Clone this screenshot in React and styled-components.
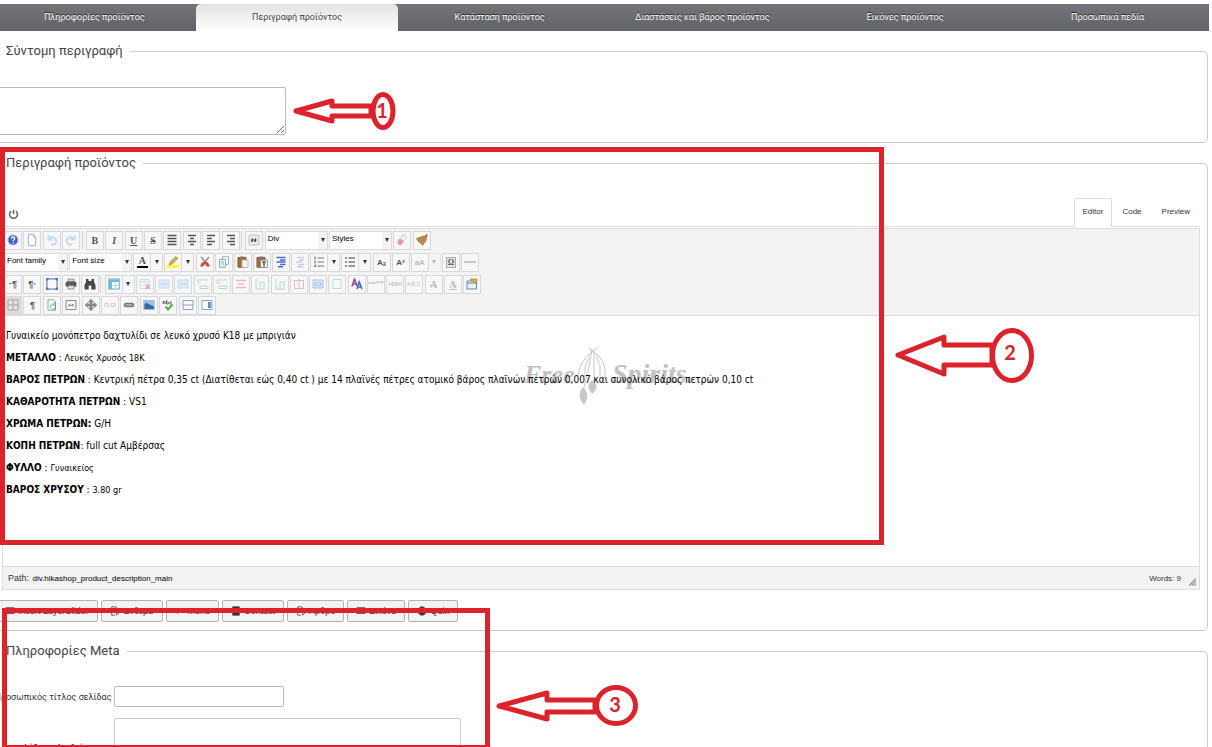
import React, { useState } from "react";
import styled, { createGlobalStyle, css } from "styled-components";

const RED = "#dc232b";

const productTabs = [
  "Πληροφορίες προϊόντος",
  "Περιγραφή προϊόντος",
  "Κατάσταση προϊόντος",
  "Διαστάσεις και βάρος προϊόντος",
  "Εικόνες προϊόντος",
  "Προσωπικά πεδία",
];

const glyphs = {
  help: (
    <>
      <circle cx="6" cy="6" r="5" fill="#3d63c9" stroke="#9fb2e4" />
      <path d="M4.3 4.6q.2-1.6 1.8-1.6t1.7 1.5q0 .8-.9 1.3-.8.5-.8 1.2M6.1 8.3v1.2" fill="none" stroke="#fff" strokeWidth="1.3" />
    </>
  ),
  page: <path d="M2.5.5h5l2 2.500v8.500h-7zM7.500.5v2.500h2" fill="#fafcff" stroke="#a9b9c4" />,
  undo: <path d="M2.500 1.500v4h4M3 5q3-3.500 6-.500t-.500 6H5" fill="none" stroke="#bddcec" strokeWidth="2" />,
  redo: <path d="M9.500 1.500v4h-4M9 5q-3-3.500-6-.500t.500 6H7" fill="none" stroke="#bddcec" strokeWidth="2" />,
  justify: <path d="M1.500 1.500h9M1.500 4.500h9M1.500 7.500h9M1.500 10.500h9" stroke="#555" strokeWidth="1.700" />,
  center: <path d="M2 1.500h8M4 4.500h4M2 7.500h8M4 10.500h4" stroke="#555" strokeWidth="1.500" />,
  left: <path d="M2 1.500h8M2 4.500h5M2 7.500h8M2 10.500h5" stroke="#555" strokeWidth="1.500" />,
  right: <path d="M2 1.500h8M5 4.500h5M2 7.500h8M5 10.500h5" stroke="#555" strokeWidth="1.500" />,
  quote: (
    <>
      <rect x="1" y="1" width="10" height="10" rx="1" fill="#eee" stroke="#bbb" />
      <path d="M3.500 7.500V5.500l1.500-1v3zM6.500 7.500V5.500l1.500-1v3z" fill="#444" stroke="#444" strokeWidth=".6" />
    </>
  ),
  eraser: (
    <>
      <path d="M1.500 8.500l2-3.500 4 2-2 3.500q-3 1-4-2z" fill="#e79aa4" stroke="#c98a94" strokeWidth=".6" />
      <path d="M4 5l3-4q3-.500 3.800 2L7.500 7z" fill="#f3eef0" stroke="#aab" strokeWidth=".6" />
    </>
  ),
  broom: (
    <>
      <path d="M11.500.5L8 4" stroke="#8a5a28" strokeWidth="1.500" />
      <path d="M.5 4.500l7-2.500 3 .5-.5 4L6.500 11.500 5 9 3 8.500z" fill="#c08a45" stroke="#98672c" strokeWidth=".6" />
    </>
  ),
  cut: (
    <>
      <path d="M2 1l6 7M10 1L4 8" stroke="#8c8c8c" strokeWidth="1.400" />
      <path d="M3 6.500l3-1 3 1 2 4H8L6 8l-2 2.500H1z" fill="#d9433f" />
    </>
  ),
  copy: (
    <>
      <path d="M4.500.8h6v7.500h-6z" fill="#fff" stroke="#8eabb0" />
      <path d="M1.500 3.500h6v7.700h-6zM3 6h3M3 8h3" fill="#eef8f8" stroke="#8eabb0" />
    </>
  ),
  paste: (
    <>
      <path d="M1 1.500h8v9.700H1z" fill="#a5713d" stroke="#82542a" />
      <path d="M3 .5h4v2H3z" fill="#777" />
      <path d="M5 4h6v7.500H5z" fill="#f4f4f4" stroke="#aaa" strokeWidth=".7" />
    </>
  ),
  pasteText: (
    <>
      <path d="M1 1.500h8v9.700H1z" fill="#a5713d" stroke="#82542a" />
      <path d="M3 .5h4v2H3z" fill="#777" />
      <path d="M4.500 4h7v7.500h-7z" fill="#f4f4f4" stroke="#777" strokeWidth=".7" />
      <path d="M6 6h4M8 6v4.500" stroke="#333" strokeWidth="1.200" />
    </>
  ),
  indent: <path d="M1.500 1.500h9M5 4h5.500M1.500 6h9M5 8.500h5.500M3 10.800h5" stroke="#4a6fc8" strokeWidth="1.500" />,
  outdent: <path d="M3 1.500h7M5 4h5M2 6h6M4 8.500h6M3 10.800h6" stroke="#c6d0e2" strokeWidth="1.400" />,
  ol: <path d="M4.500 2H11M4.500 6H11M4.500 10H11M2 .5v3M2 4.500v3M1 10.500h1.500v-2" stroke="#777" strokeWidth="1.200" fill="none" />,
  ul: <path d="M4.500 2H11M4.500 6H11M4.500 10H11M1 2h2M1 6h2M1 10h2" stroke="#777" strokeWidth="1.300" />,
  line: <path d="M0 6h12" stroke="#999" />,
  full: (
    <>
      <rect x="1" y="1" width="10" height="10" fill="#f6faff" stroke="#5271b9" />
      <path d="M0 0h3.500L0 3.500zM12 0v3.500L8.500 0zM0 12V8.500L3.500 12zM12 12H8.500L12 8.500z" fill="#5271b9" />
    </>
  ),
  print: (
    <>
      <path d="M3 1h6v3H3z" fill="#d4d4d4" stroke="#777" strokeWidth=".7" />
      <rect x=".5" y="3.500" width="11" height="5.500" rx="2" fill="#565c5a" />
      <path d="M3 7.500h6V11H3z" fill="#d8e4dd" stroke="#777" strokeWidth=".7" />
    </>
  ),
  search: (
    <path d="M2 1h2.500v2h3V1H10v3l1.500 3v4.500H7.300V7.500H4.700v4H.5V7L2 4z" fill="#474747" />
  ),
  table: (
    <>
      <rect x=".8" y="1" width="10.400" height="10" fill="#fff" stroke="#68a8c8" />
      <path d="M1 1.500h10v2.500H1zM1 1.500h3V11H1z" fill="#72bed8" />
      <path d="M7.500 4v7M4 7.500h7" stroke="#b9dbe9" />
    </>
  ),
  rowRed: (
    <>
      <path d="M1 1.500h9v9H1zM1 4h9" fill="#eef6fa" stroke="#c9dfe9" />
      <path d="M6.500 6.500l4.500 4.500M11 6.500L6.500 11" stroke="#e0a3a3" strokeWidth="1.400" />
    </>
  ),
  rowBlue: <path d="M1 2h10v8H1zM3 5h6v2H3z" fill="#e4f0fa" stroke="#bdd5ec" strokeWidth=".9" />,
  rowGreen: <path d="M1 2h10M1 2v3h3M3 8h8v2.500H3z" fill="#f3fbf5" stroke="#b5dfbe" />,
  delRow: <path d="M1 2.500h10M1 9.500h10M3 6h6" stroke="#e8bcbf" strokeWidth="1.600" />,
  colGreen: <path d="M2 1v10h8V4H6v7" fill="#f3fbf5" stroke="#b5dfbe" />,
  delCol: <path d="M1.500 2.500h9v8h-9zM6 1v10" fill="#f7f7f7" stroke="#e0bcbf" />,
  cells: <path d="M1 2h10v8H1zM3 5h6v2.500H3z" fill="#dbe8f8" stroke="#a9c4e8" />,
  splitCells: <path d="M2 1.500h8v9H2z" fill="#f4fafc" stroke="#bedce8" />,
  styleProps: (
    <>
      <path d="M1 8.500L3.500 1 6 8M2 6h3" fill="none" stroke="#9c4b9c" strokeWidth="1.700" />
      <path d="M6 11l2.200-7 2.800 7M7 9h3.500" fill="none" stroke="#3f70bd" strokeWidth="1.700" />
    </>
  ),
  attribs: (
    <>
      <path d="M1 3h9.500v8H1zM1 5h9.500" fill="#e9f2fb" stroke="#6488ae" />
      <path d="M4 1h7v4H8L6 3z" fill="#e2a24b" stroke="#b87a2b" strokeWidth=".6" />
    </>
  ),
  guide: <path d="M1 1h10v10H1zM6 1v10M1 6h10" fill="#e4e4e4" stroke="#a5a5a5" />,
  clean: (
    <>
      <path d="M2 .8h5.500l2 2v8.400H2z" fill="#f7fcfa" stroke="#8aa9ae" />
      <path d="M4.500 8.500q0-4 4-3.500M8 3l2 2-2 2M9.500 7v3H6" fill="none" stroke="#5aa05e" />
    </>
  ),
  nbsp: <path d="M1 1.500h10v9H1zM4 8V5l2 2 2-2v3" fill="#f6f6f6" stroke="#888" />,
  move: (
    <path d="M6 0l2.500 3H7v2h2V3.500L12 6 9 8.500V7H7v2h1.500L6 12 3.500 9H5V7H3v1.500L0 6l3-2.500V5h2V3H3.500z" fill="#858b90" stroke="#858b90" strokeWidth=".6" />
  ),
  unlink: <path d="M1 4.500h3.500v3H1zM7.500 4.500H11v3H7.500z" fill="none" stroke="#d3d3d3" strokeWidth="1.200" />,
  link: (
    <>
      <rect x=".8" y="3.800" width="10.400" height="4.500" rx="2" fill="#777" />
      <path d="M2.500 6h7" stroke="#ddd" />
    </>
  ),
  image: (
    <>
      <rect x=".8" y="1.500" width="10.400" height="9" fill="#9bc5e8" stroke="#a5bdd0" />
      <path d="M1.500 10V5q2-2 4 0l5.500 2.500V10z" fill="#2f6ca0" />
    </>
  ),
  spell: (
    <>
      <path d="M1 5V2.500h2V5M1 4h2M4.500 1v4h1.800V3H4.500M10 3H8v2h2" fill="none" stroke="#555" strokeWidth=".8" />
      <path d="M3.500 7.500l2.500 3 4.500-5" fill="none" stroke="#4fae45" strokeWidth="2" />
    </>
  ),
  breakLine: <path d="M1 1.500h10v9H1zM1 6h10" fill="#f5f9fd" stroke="#8ba3ba" />,
  columns: (
    <>
      <path d="M1 1.500h10v9H1z" fill="#fff" stroke="#8ba3ba" />
      <path d="M7 3h3v6H7z" fill="#6a8fcb" />
    </>
  ),
};

// rows of the editor toolbar: each entry is a button, a separator or a list
const toolbar = [
  {
    width: 427,
    items: [
      { icon: "help", name: "Help" },
      { icon: "page", name: "New document" },
      { icon: "undo", name: "Undo" },
      { icon: "redo", name: "Redo" },
      { sep: true },
      { text: "B", look: "bold", name: "Bold" },
      { text: "I", look: "italic", name: "Italic" },
      { text: "U", look: "under", name: "Underline" },
      { text: "S", look: "strike", name: "Strikethrough" },
      { icon: "justify", name: "Justify" },
      { icon: "center", name: "Align center" },
      { icon: "left", name: "Align left" },
      { icon: "right", name: "Align right" },
      { sep: true },
      { icon: "quote", name: "Blockquote" },
      { list: "Div", name: "Format", width: 63 },
      { list: "Styles", name: "Style", width: 63 },
      { icon: "eraser", name: "Remove format" },
      { icon: "broom", name: "Cleanup" },
    ],
  },
  {
    width: 475,
    items: [
      { list: "Font family", name: "Font family", width: 64 },
      { list: "Font size", name: "Font size", width: 63 },
      { text: "A", look: "ink", name: "Text color", menu: true },
      { icon: "marker", look: "marker", name: "Background color", menu: true },
      { icon: "cut", name: "Cut" },
      { icon: "copy", name: "Copy" },
      { icon: "paste", name: "Paste" },
      { icon: "pasteText", name: "Paste as text" },
      { icon: "indent", name: "Indent" },
      { icon: "outdent", name: "Outdent", off: true },
      { icon: "ol", name: "Numbered list", menu: true },
      { icon: "ul", name: "Bulleted list", menu: true },
      { text: "Aₐ", look: "small", name: "Subscript" },
      { text: "Aᶻ", look: "small", name: "Superscript" },
      { text: "aA", look: "small", name: "Change case", off: true, menu: true },
      { text: "Ω", look: "boxed", name: "Special character" },
      { icon: "line", name: "Horizontal line" },
    ],
  },
  {
    width: 477,
    items: [
      { text: "·¶", look: "pilcrow", name: "Left to right" },
      { text: "¶·", look: "pilcrow", name: "Right to left" },
      { icon: "full", name: "Fullscreen" },
      { icon: "print", name: "Print" },
      { icon: "search", name: "Find" },
      { sep: true },
      { icon: "table", name: "Table", menu: true },
      { icon: "rowRed", name: "Delete table" },
      { icon: "rowBlue", name: "Row properties" },
      { icon: "rowBlue", name: "Cell properties" },
      { icon: "rowGreen", name: "Row before" },
      { icon: "rowGreen", name: "Row after" },
      { icon: "delRow", name: "Delete row" },
      { icon: "colGreen", name: "Column before" },
      { icon: "colGreen", name: "Column after" },
      { icon: "delCol", name: "Delete column" },
      { icon: "cells", name: "Merge cells" },
      { icon: "splitCells", name: "Split cells" },
      { icon: "styleProps", name: "CSS style" },
      { text: "““””", look: "quotes", name: "Citation", off: true },
      { text: "ABBR", look: "tiny", name: "Abbreviation", off: true },
      { text: "A.B.C.", look: "tiny", name: "Acronym", off: true },
      { text: "A", look: "strike", name: "Deletion", off: true },
      { text: "A", look: "under", name: "Insertion", off: true },
      { icon: "attribs", name: "Attributes" },
    ],
  },
  {
    width: 212,
    items: [
      { icon: "guide", name: "Guidelines", on: true },
      { text: "¶", look: "pilcrow", name: "Show blocks" },
      { icon: "clean", name: "Template" },
      { icon: "nbsp", name: "Non-breaking space" },
      { icon: "move", name: "Layer" },
      { icon: "unlink", name: "Unlink" },
      { icon: "link", name: "Link" },
      { icon: "image", name: "Image" },
      { icon: "spell", name: "Spellcheck" },
      { icon: "breakLine", name: "Page break" },
      { icon: "columns", name: "Read more" },
    ],
  },
];

glyphs.marker = (
  <>
    <path d="M0 9h12v3H0z" fill="#fdf432" />
    <path d="M2 9l1-3 6-5.500 2 2L5 8z" fill="#d9b445" stroke="#8a7a4a" strokeWidth=".6" />
  </>
);

const description = [
  { value: "Γυναικείο μονόπετρο δαχτυλίδι σε λευκό χρυσό Κ18 με μπριγιάν" },
  { label: "ΜΕΤΑΛΛΟ", colon: " : ", value: "Λευκός Χρυσός 18Κ", small: true },
  {
    label: "ΒΑΡΟΣ ΠΕΤΡΩΝ",
    colon: " : ",
    value:
      "Κεντρική πέτρα 0,35 ct (Διατίθεται εώς 0,40 ct ) με 14 πλαϊνές πέτρες ατομικό βάρος πλαϊνών πετρών 0,007 και συνολικό βάρος πετρών 0,10 ct",
  },
  { label: "ΚΑΘΑΡΟΤΗΤΑ ΠΕΤΡΩΝ", colon: " : ", value: "VS1" },
  { label: "ΧΡΩΜΑ ΠΕΤΡΩΝ:", colon: " ", value: "G/H" },
  { label: "ΚΟΠΗ ΠΕΤΡΩΝ", colon: ": ", value: "full cut Αμβέρσας" },
  { label: "ΦΥΛΛΟ", colon: " : ", value: "Γυναικείος", small: true },
  { label: "ΒΑΡΟΣ ΧΡΥΣΟΥ", colon: " : ", value: "3.80 gr", small: true },
];

const insertButtons = [
  { title: "Insert LayerSlider", icon: "M1 2h10v7H1zM1 4h10" },
  { title: "Ένθεμα", icon: "M2 1h5l2 2v2M2 1v10h4M8 6v5l3-3z" },
  { title: "Menu", icon: "M5 7l-2 2-2-2 3-3M7 5l2-2 2 2-3 3M4 8l4-4" },
  { title: "Contact", icon: "M2 1h8v10H2zM4 4h4M4 7h4", solid: true },
  { title: "Άρθρο", icon: "M2 1h5l2 2v2M2 1v10h4M8 6v5l3-3z" },
  { title: "Εικόνα", icon: "M1 2h10v7H1zM2 8l3-3 2 2 2-1" },
  { title: "Quix", icon: "M6 1a5 5 0 1 0 .1 0zM6 4v4", solid: true },
];

function ToolItem({ item }) {
  if (item.sep) {
    return <Separator />;
  }
  if (item.list) {
    return (
      <ListBox $width={item.width}>
        <ListSelect aria-label={item.name} defaultValue={item.list}>
          <option>{item.list}</option>
        </ListSelect>
        <Caret />
      </ListBox>
    );
  }
  return (
    <ToolGroup>
      <ToolButton type="button" aria-label={item.name} $on={item.on} $off={item.off} $look={item.look}>
        {item.icon && <Glyph viewBox="0 0 12 12">{glyphs[item.icon]}</Glyph>}
        {item.text && <span>{item.text}</span>}
      </ToolButton>
      {item.menu && (
        <MenuButton type="button" aria-label={`${item.name} menu`} $off={item.off}>
          <Caret />
        </MenuButton>
      )}
    </ToolGroup>
  );
}

function Watermark() {
  return (
    <WatermarkSvg viewBox="0 0 174 60" aria-hidden="true">
      <g fill="#c2c2c2" fontFamily="'Liberation Serif', serif" fontWeight="700" fontStyle="italic">
        <text x="1" y="36" fontSize="26">Free</text>
        <text x="89" y="36" fontSize="28">Spirits.</text>
      </g>
      <g fill="none" stroke="#c8c8c8">
        <path d="M69 5q-12 8-14 24M71 5q13 8 11 26M69 2q-3 22-9 42M71 3v36M66 1l8 7M75 0l-8 7" />
        <path d="M68 8q-8 10-6 22M73 9q5 8 4 20" stroke="#e2e2e2" strokeWidth="2" />
      </g>
      <path d="M60 40q-7 8 1 18 7-10-1-18zM69 33q-7 6 0 14 9-7 0-14z" fill="#c8c8c8" />
    </WatermarkSvg>
  );
}

function Annotations() {
  return (
    <Overlay aria-hidden="true">
      <g fill="none" stroke={RED} strokeWidth="5">
        <rect x="2.500" y="149.500" width="879" height="393" />
        <rect x="4.500" y="610.500" width="483" height="137" />
      </g>
      <g fill="#fff" stroke={RED} strokeWidth="5" strokeLinejoin="round">
        <path d="M296 111l36-10v5h40v10h-40v5z" />
        <path d="M371 106v10" />
        <ellipse cx="383" cy="111" rx="10" ry="16.500" />
        <path d="M898 355l46-18v8h48v20h-48v9z" />
        <ellipse cx="1012" cy="355.500" rx="19.500" ry="25" />
        <path d="M499 706l48-13v7h48v12h-48v7z" />
        <ellipse cx="616" cy="705.500" rx="19.500" ry="18" />
      </g>
      <g fill={RED} fontFamily="Lato, sans-serif" fontWeight="700" fontSize="20" textAnchor="middle">
        <text x="382" y="118">1</text>
        <text x="1010" y="360">2</text>
        <text x="615" y="712">3</text>
      </g>
    </Overlay>
  );
}

export default function App() {
  const [activeTab, setActiveTab] = useState(1);
  const [mode, setMode] = useState("Editor");

  return (
    <Viewport>
      <GlobalStyle />
      <Page>
        <TabBar>
          {productTabs.map((title, index) => (
            <ProductTab
              key={title}
              type="button"
              $active={index === activeTab}
              onClick={() => setActiveTab(index)}
            >
              {title}
            </ProductTab>
          ))}
        </TabBar>

        <Section>
          <Legend>Σύντομη περιγραφή</Legend>
          <ShortText aria-label="Σύντομη περιγραφή" />
        </Section>

        <Section>
          <Legend>Περιγραφή προϊόντος</Legend>
          <Editor>
            <ModeBar>
              <PowerButton type="button" aria-label="Toggle editor">
                <PowerIcon viewBox="0 0 12 12">
                  <path d="M3.500 2.300a4.300 4.300 0 1 0 5 0M6 .8v5" fill="none" stroke="#666" strokeWidth="1.600" />
                </PowerIcon>
              </PowerButton>
              <ModeTabs>
                {["Editor", "Code", "Preview"].map((name) => (
                  <ModeTab key={name} type="button" $active={mode === name} onClick={() => setMode(name)}>
                    {name}
                  </ModeTab>
                ))}
              </ModeTabs>
            </ModeBar>
            <EditorFrame>
              <Toolbar>
                {toolbar.map((row) => (
                  <ToolRow key={row.width} $width={row.width}>
                    {row.items.map((item, index) => (
                      <ToolItem key={index} item={item} />
                    ))}
                  </ToolRow>
                ))}
              </Toolbar>
              <EditorBody>
                <Watermark />
                {description.map((line) => (
                  <Paragraph key={line.value}>
                    {line.label && <strong>{line.label}</strong>}
                    {line.colon}
                    {line.small ? <small>{line.value}</small> : line.value}
                  </Paragraph>
                ))}
              </EditorBody>
              <StatusBar>
                <Path>
                  Path: <a href="#path">div.hikashop_product_description_main</a>
                </Path>
                <Words>Words: 9</Words>
                <Grip viewBox="0 0 8 8">
                  <path d="M0 8l8-8M3 8l5-5M6 8l2-2" stroke="#999" strokeWidth="1.500" />
                </Grip>
              </StatusBar>
            </EditorFrame>
          </Editor>
          <InsertBar>
            {insertButtons.map((button) => (
              <InsertButton key={button.title} type="button">
                <InsertIcon viewBox="0 0 12 12">
                  <path d={button.icon} fill={button.solid ? "#333" : "none"} stroke="#444" />
                </InsertIcon>
                {button.title}
              </InsertButton>
            ))}
          </InsertBar>
        </Section>

        <Section>
          <Legend>Πληροφορίες Meta</Legend>
          <MetaForm>
            <label htmlFor="page-title">Προσωπικός τίτλος σελίδας</label>
            <TitleInput id="page-title" type="text" />
            <label htmlFor="page-keywords">Λέξεις κλειδιά</label>
            <MetaText id="page-keywords" />
          </MetaForm>
        </Section>
      </Page>
      <Annotations />
    </Viewport>
  );
}

const GlobalStyle = createGlobalStyle`
  * {
    box-sizing: border-box;
  }
  body {
    margin: 0;
    background: #fff;
    color: #333;
    font-family: Roboto, "Open Sans", sans-serif;
  }
  button, input, select, textarea {
    margin: 0;
    font: inherit;
    color: inherit;
  }
`;

const Viewport = styled.div`
  position: relative;
  height: 100vh;
  overflow: hidden;
`;

// the left edge of the admin page is scrolled out of view
const Page = styled.main`
  margin: 0 4px 0 -7px;
  padding-top: 4px;
`;

const TabBar = styled.nav`
  display: grid;
  grid-template-columns: repeat(6, 1fr);
  height: 27px;
  margin-right: -1px;
  background: linear-gradient(#747578, #626366);
`;

const ProductTab = styled.button`
  border: 0;
  padding: 0 0 2px;
  background: none;
  color: #fff;
  font-size: 9px;
  line-height: 20px;
  text-shadow: 0 -1px 0 #222;
  cursor: pointer;
  ${({ $active }) =>
    $active &&
    css`
      border-radius: 5px 5px 0 0;
      background: linear-gradient(#e2e2e2, #fff);
      color: #444;
      text-shadow: 0 1px 0 #fff;
    `}
`;

const Section = styled.fieldset`
  min-width: 0;
  margin: 10px 0 0;
  padding: 0;
  border: 1px solid #ccc;
  border-radius: 5px;
`;

const Legend = styled.legend`
  margin-left: 5px;
  padding: 0 7px;
  font-size: 13px;
  line-height: 20px;
  color: #444;
`;

const ShortText = styled.textarea`
  display: block;
  width: 292px;
  height: 48px;
  margin: 26px 0 7px;
  border: 1px solid #bbb;
  border-radius: 2px;
`;

const Editor = styled.div`
  margin: 25px 7px 0 8px;
  font-family: "Liberation Sans", Arial, sans-serif;
`;

const ModeBar = styled.div`
  display: flex;
  align-items: flex-end;
  justify-content: space-between;
  height: 29px;
  border-bottom: 1px solid #ddd;
`;

const PowerButton = styled.button`
  display: flex;
  padding: 6px;
  border: 0;
  background: none;
`;

const PowerIcon = styled.svg`
  width: 11px;
  height: 11px;
`;

const ModeTabs = styled.div`
  display: flex;
  margin-bottom: -1px;
`;

const ModeTab = styled.button`
  height: 29px;
  padding: 0 9px 2px;
  border: 1px solid transparent;
  background: none;
  font-size: 8px;
  ${({ $active }) =>
    $active &&
    css`
      padding: 0 8px 2px;
      border-color: #ddd #ddd #fff;
      border-radius: 3px 3px 0 0;
      background: #fff;
    `}
`;

const EditorFrame = styled.div`
  margin-top: 1px;
  border: 1px solid #ddd;
`;

const Toolbar = styled.div`
  padding-left: 1px;
  background: #f3f3f3;
  border-bottom: 1px solid #ddd;
`;

const ToolRow = styled.div`
  display: flex;
  align-items: center;
  justify-content: space-between;
  width: ${({ $width }) => $width}px;
  height: 22px;
  &:last-child {
    height: 20px;
  }
`;

const Separator = styled.span`
  width: 3px;
  height: 18px;
  border-left: 1px solid #d5d5d5;
`;

const ListBox = styled.div`
  display: flex;
  align-items: center;
  width: ${({ $width }) => $width}px;
  height: 19px;
  border: 1px solid #ddd;
  padding-right: 2px;
`;

const ListSelect = styled.select`
  flex: 1;
  min-width: 0;
  height: 17px;
  margin-right: 3px;
  padding: 0 2px 3px;
  appearance: none;
  border: 0;
  border-radius: 0;
  background: #fff;
  color: #000;
  font-size: 8px;
`;

const Caret = styled.span`
  width: 0;
  height: 0;
  border: 2px solid transparent;
  border-top: 4px solid #333;
  border-bottom: 0;
`;

const ToolGroup = styled.div`
  display: flex;
`;

const looks = {
  bold: css`font-weight: 700;`,
  italic: css`font-style: italic; font-weight: 700;`,
  under: css`span { text-decoration: underline; }`,
  strike: css`span { text-decoration: line-through; }`,
  small: css`font: 700 8px "Liberation Sans", sans-serif;`,
  tiny: css`font: 5px "Liberation Sans", sans-serif;`,
  quotes: css`font: 700 8px "Liberation Serif", serif;`,
  pilcrow: css`font: 700 9px "Liberation Sans", sans-serif;`,
  boxed: css`
    span {
      border: 1px solid #aaa;
      background: #e6e6e6;
      font-size: 8px;
      line-height: 9px;
      padding: 0 1px;
    }
  `,
  ink: css`
    span {
      width: 11px;
      border-bottom: 2px solid #000;
      line-height: 10px;
    }
  `,
};

const ToolButton = styled.button`
  display: flex;
  align-items: center;
  justify-content: center;
  width: 18px;
  height: 19px;
  padding: 0;
  border: 1px solid #d8d8d8;
  background: ${({ $on }) => ($on ? "#dcdcdc" : "#f7f7f7")};
  color: ${({ $off }) => ($off ? "#bbb" : "#555")};
  font-family: "Liberation Serif", serif;
  font-size: 10px;
  font-weight: 700;
  ${({ $look }) => looks[$look]}
`;

const MenuButton = styled(ToolButton)`
  width: 12px;
  border-left: 0;
  opacity: ${({ $off }) => ($off ? 0.3 : 1)};
`;

const Glyph = styled.svg`
  width: 12px;
  height: 12px;
`;

const EditorBody = styled.div`
  position: relative;
  height: 250px;
  padding: 9px 3px;
  color: #000;
  font-family: "DejaVu Sans Condensed", Tahoma, sans-serif;
  font-size: 10px;
`;

const Paragraph = styled.p`
  position: relative;
  margin: 0;
  line-height: 22px;
  small {
    font-size: 9px;
  }
`;

const WatermarkSvg = styled.svg`
  position: absolute;
  left: 520px;
  top: 31px;
  width: 174px;
  height: 60px;
`;

const StatusBar = styled.div`
  display: flex;
  align-items: center;
  height: 23px;
  padding: 0 3px 0 5px;
  border-top: 1px solid #ddd;
  background: #f3f3f3;
  font-size: 8px;
`;

const Path = styled.span`
  flex: 1;
  font-size: 9px;
  a {
    margin-left: 1px;
    color: #000;
    font-size: 8px;
    text-decoration: none;
  }
`;

const Words = styled.span`
  margin-right: 8px;
`;

const Grip = styled.svg`
  align-self: flex-end;
  width: 7px;
  height: 8px;
  margin-bottom: 3px;
`;

const InsertBar = styled.div`
  display: flex;
  gap: 3px;
  margin: 10px 0 8px 2px;
  font-family: "Liberation Sans", Arial, sans-serif;
  font-size: 9px;
`;

const InsertButton = styled.button`
  display: flex;
  align-items: center;
  gap: 3px;
  height: 22px;
  padding: 0 8px;
  border: 1px solid #b3b3b3;
  border-radius: 2px;
  background: #f3f3f3;
`;

const InsertIcon = styled.svg`
  width: 10px;
  height: 10px;
`;

const MetaForm = styled.div`
  display: grid;
  grid-template-columns: 118px 1fr;
  align-items: center;
  gap: 11px 2px;
  padding: 25px 0;
  font-size: 9px;
  label {
    justify-self: center;
    white-space: nowrap;
  }
`;

const TitleInput = styled.input`
  width: 170px;
  height: 21px;
  border: 1px solid #bbb;
  border-radius: 2px;
`;

const MetaText = styled.textarea`
  width: 347px;
  height: 60px;
  border: 1px solid #ccc;
  border-radius: 2px;
`;

const Overlay = styled.svg`
  position: absolute;
  inset: 0;
  width: 100%;
  height: 100%;
  pointer-events: none;
`;
